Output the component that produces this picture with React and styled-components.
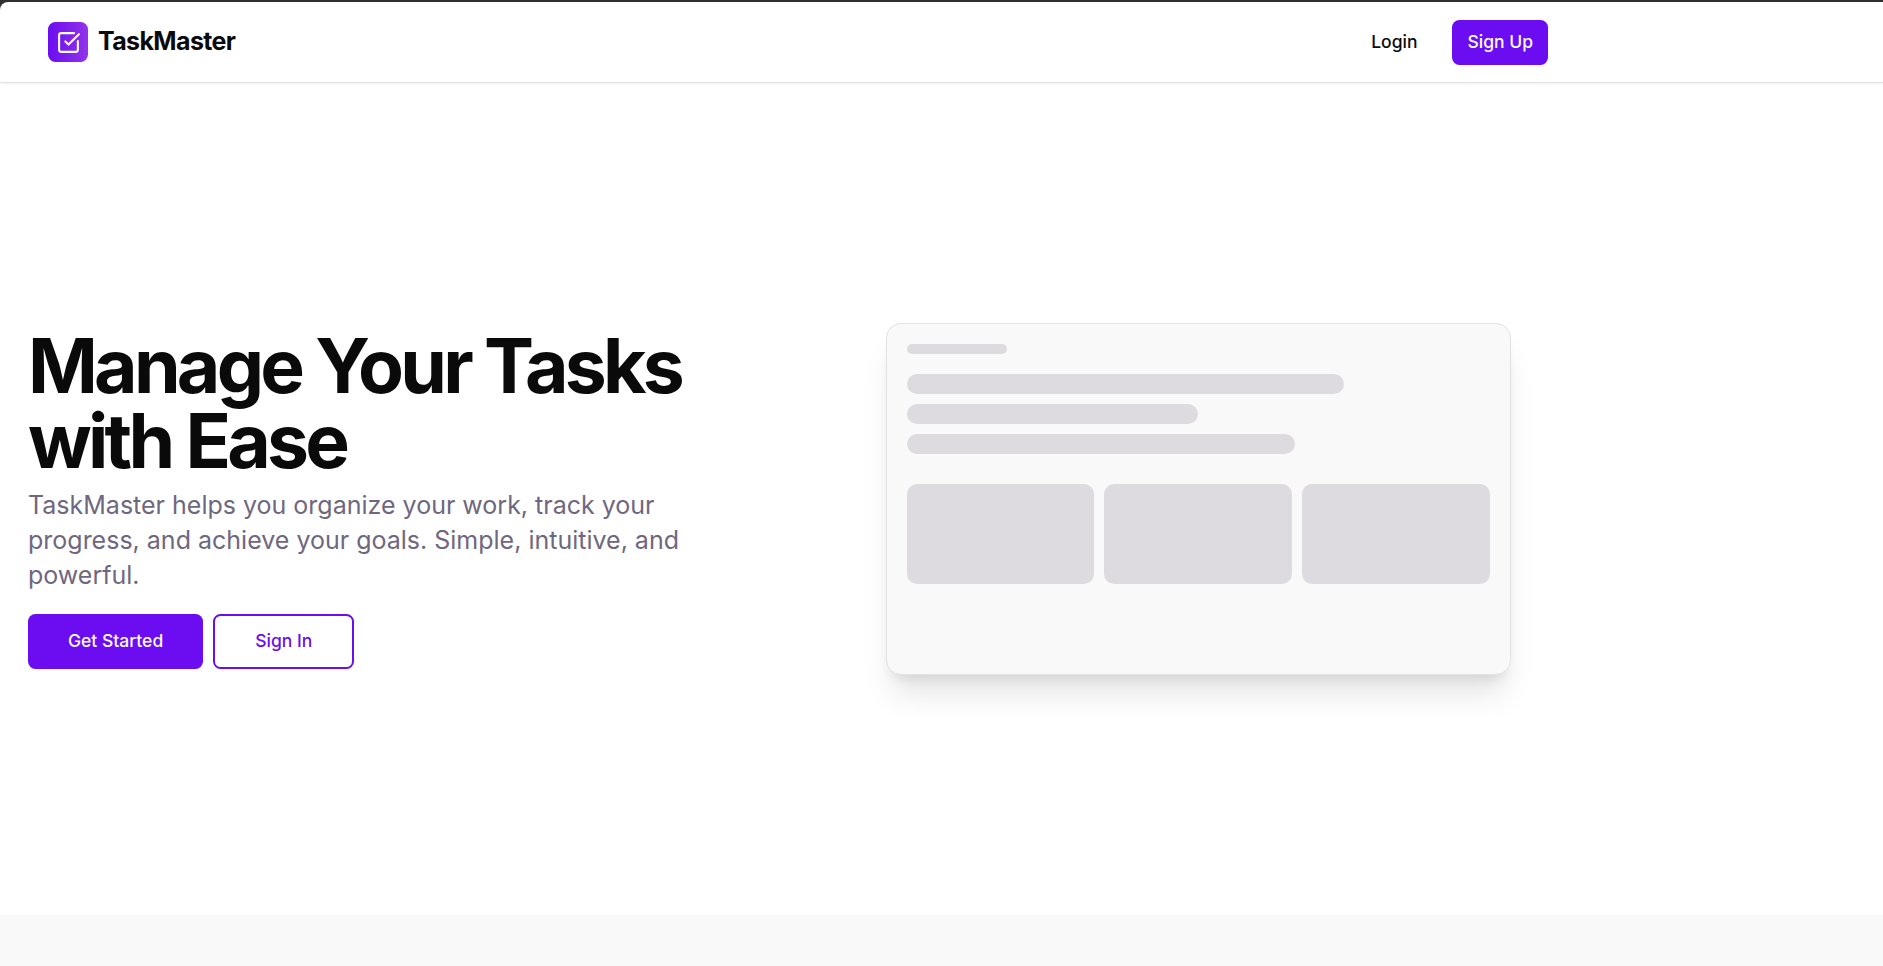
import React from "react";
import styled, { createGlobalStyle } from "styled-components";
import { SquareCheckBig } from "lucide-react";

const purple = "#6b0df0";

const GlobalStyle = createGlobalStyle`
  *, *::before, *::after { box-sizing: border-box; }
  html, body { margin: 0; height: 100%; overflow: hidden; }
  body {
    background: #322f30;
    color: #0a0a0a;
    font-family: Inter, "Liberation Sans", sans-serif;
  }
  h1, p { margin: 0; }
`;

const Frame = styled.div`
  height: 966px;
  padding-top: 2px;
  display: flex;
`;

const Page = styled.div`
  flex: 1;
  display: flex;
  flex-direction: column;
  background: #ffffff;
  border-top-left-radius: 8px;
  overflow: hidden;
`;

const Header = styled.header`
  flex: none;
  height: 81px;
  border-bottom: 1px solid #e2e2e4;
  box-shadow: 0 1px 3px rgba(0, 0, 0, 0.06);
`;

const HeaderInner = styled.div`
  width: 1596px;
  height: 80px;
  padding: 0 48px;
  display: flex;
  align-items: center;
  justify-content: space-between;
`;

const Brand = styled.a`
  display: flex;
  align-items: center;
  gap: 10px;
`;

const BrandMark = styled.span`
  width: 40px;
  height: 40px;
  display: flex;
  align-items: center;
  justify-content: center;
  border-radius: 7.5px;
  background: linear-gradient(to right, ${purple}, #9333ea);
  color: #ffffff;
`;

const BrandName = styled.span`
  padding-bottom: 2px;
  font-size: 25px;
  line-height: 35px;
  font-weight: 700;
  letter-spacing: -0.025em;
`;

const Nav = styled.nav`
  display: flex;
  align-items: center;
  gap: 20px;
  padding-top: 1px;
`;

const Button = styled.button`
  display: inline-flex;
  align-items: center;
  justify-content: center;
  height: ${(p) => (p.$large ? 55 : 45)}px;
  padding: 0 ${(p) => (p.$large ? 40 : 15)}px 2px;
  border: ${(p) => (p.$variant === "outline" ? `2px solid ${purple}` : "0")};
  border-radius: 7.5px;
  background: ${(p) => (p.$variant === "solid" ? purple : "transparent")};
  color: ${(p) =>
    ({ solid: "#fafafa", outline: purple, ghost: "#0a0a0a" })[p.$variant]};
  font: 500 17.5px/25px Inter, "Liberation Sans", sans-serif;
  white-space: nowrap;
`;

const Hero = styled.section`
  flex: none;
  width: 1538.6px;
  height: 832px;
  padding: 0 28px;
  display: flex;
  align-items: center;
  justify-content: space-between;
`;

const Copy = styled.div`
  width: 698px;
  padding-bottom: 1px;
  display: flex;
  flex-direction: column;
  gap: 21px;
`;

const CopyText = styled.div`
  display: flex;
  flex-direction: column;
  gap: 10px;
`;

const Title = styled.h1`
  font-size: 75px;
  line-height: 75px;
  font-weight: 700;
  letter-spacing: -0.05em;
`;

const Lead = styled.p`
  color: #6f6780;
  font-size: 25px;
  line-height: 35px;
`;

const Actions = styled.div`
  display: flex;
  gap: 10px;
`;

const Preview = styled.div`
  width: 625px;
  height: 351.5px;
  padding: 20px;
  display: flex;
  flex-direction: column;
  border: 1px solid #e2e2e4;
  border-radius: 15px;
  background: #f9f9f9;
  box-shadow: 0 25px 31.25px -6.25px rgba(0, 0, 0, 0.1),
    0 10px 12.5px -7.5px rgba(0, 0, 0, 0.1);
`;

const Bar = styled.div`
  flex: none;
  width: ${(p) => p.$width};
  height: ${(p) => (p.$thin ? 10 : 20)}px;
  border-radius: 10px;
  background: #dddbe0;
`;

const Bars = styled.div`
  display: flex;
  flex-direction: column;
  gap: 10px;
  margin: 20px 0 30px;
`;

const Tiles = styled.div`
  display: grid;
  grid-template-columns: repeat(3, 1fr);
  gap: 10px;
`;

const Tile = styled.div`
  height: 100px;
  border-radius: 10px;
  background: #dddbe0;
`;

const NextSection = styled.section`
  flex: 1;
  background: #f9f9f9;
`;

export default function App() {
  return (
    <Frame>
      <GlobalStyle />
      <Page>
        <Header>
          <HeaderInner>
            <Brand>
              <BrandMark>
                <SquareCheckBig size={25} />
              </BrandMark>
              <BrandName>TaskMaster</BrandName>
            </Brand>
            <Nav>
              <Button $variant="ghost">Login</Button>
              <Button $variant="solid">Sign Up</Button>
            </Nav>
          </HeaderInner>
        </Header>
        <Hero>
          <Copy>
            <CopyText>
              <Title>
                Manage Your Tasks
                <br />
                with Ease
              </Title>
              <Lead>
                TaskMaster helps you organize your work, track your
                <br />
                progress, and achieve your goals. Simple, intuitive, and
                <br />
                powerful.
              </Lead>
            </CopyText>
            <Actions>
              <Button $variant="solid" $large>Get Started</Button>
              <Button $variant="outline" $large>Sign In</Button>
            </Actions>
          </Copy>
          <Preview>
            <Bar $width="100px" $thin />
            <Bars>
              <Bar $width="75%" />
              <Bar $width="50%" />
              <Bar $width="66.6667%" />
            </Bars>
            <Tiles>
              <Tile />
              <Tile />
              <Tile />
            </Tiles>
          </Preview>
        </Hero>
        <NextSection />
      </Page>
    </Frame>
  );
}
